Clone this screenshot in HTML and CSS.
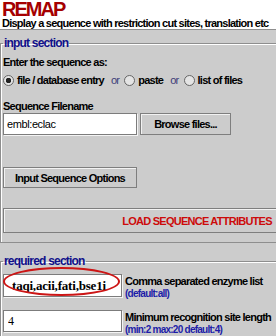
FILE: index.html
```html
<!DOCTYPE html>
<html lang="en">
<head>
    <meta charset="UTF-8">
    <meta name="viewport" content="width=device-width, initial-scale=1.0">
    <title>REMAP</title>
    <link rel="stylesheet" href="styles.css">
</head>
<body>
    <div class="page">
        <header class="head">
            <h1 class="title">REMAP</h1>
            <p class="desc">Display a sequence with restriction cut sites, translation etc</p>
        </header>

        <main class="panel">
            <fieldset class="section">
                <legend>input section</legend>
                <p class="label">Enter the sequence as:</p>
                <div class="choices">
                    <label class="choice"><input type="radio" name="src" checked> file / database entry</label>
                    <span class="or">or</span>
                    <label class="choice"><input type="radio" name="src"> paste</label>
                    <span class="or">or</span>
                    <label class="choice"><input type="radio" name="src"> list of files</label>
                </div>
                <p class="label label-file">Sequence Filename</p>
                <div class="file-row">
                    <input class="field field-file" type="text" value="embl:eclac">
                    <button class="btn btn-browse">Browse files...</button>
                </div>
                <button class="btn btn-options">Input Sequence Options</button>
                <button class="btn btn-load">LOAD SEQUENCE ATTRIBUTES</button>
            </fieldset>

            <fieldset class="section section-req">
                <legend>required section</legend>
                <div class="param">
                    <div class="param-input">
                        <input class="field field-enzyme" type="text" value="taqi,acii,fati,bse1i">
                        <span class="mark"></span>
                    </div>
                    <div class="param-text">
                        <span class="param-name">Comma separated enzyme list</span>
                        <span class="param-hint">(default:all)</span>
                    </div>
                </div>
                <div class="param param-second">
                    <div class="param-input">
                        <input class="field field-num" type="text" value="4">
                    </div>
                    <div class="param-text">
                        <span class="param-name">Minimum recognition site length</span>
                        <span class="param-hint">(min:2 max:20 default:4)</span>
                    </div>
                </div>
            </fieldset>
        </main>
    </div>
</body>
</html>
```

FILE: styles.css
```css
body {
    margin: 0;
    padding: 0;
    overflow: hidden;
    background: #cccccc;
    font-family: 'Liberation Sans', Arial, sans-serif;
    font-weight: bold;
    letter-spacing: -0.75px;
    color: #000;
}

.page {
    width: 392px;
}

.head {
    height: 29px;
    background: #fff;
    border-bottom: 1px solid #8f8f8f;
    padding: 0 2px;
}

.head .title {
    margin: 0;
    height: 18px;
    font-size: 20px;
    line-height: 18px;
    letter-spacing: -2px;
    color: #a50000;
}

.head .desc {
    margin: 0;
    font-size: 11px;
    line-height: 11px;
    white-space: nowrap;
}

.section {
    margin: 6px 0 0;
    padding: 0 2px 9px;
    border: 1px solid #8e8e8e;
    border-right: none;
    box-shadow: inset 1px 1px 0 #fff;
}

.section legend {
    margin-left: 0;
    padding: 0 1px;
    font-size: 12px;
    line-height: 14px;
    letter-spacing: -0.8px;
    color: #10108a;
}

.section-req {
    margin-top: 11px;
    border-bottom: none;
}

.label {
    margin: 5px 0 0;
    font-size: 11px;
    line-height: 14px;
}

.label-file {
    margin-top: 12px;
}

.choices {
    display: flex;
    align-items: center;
    margin-top: 4px;
    height: 14px;
    font-size: 11px;
    line-height: 14px;
    white-space: nowrap;
}

.choice {
    display: flex;
    align-items: center;
    gap: 3px;
}

.choice input {
    appearance: none;
    margin: 0;
    width: 11px;
    height: 11px;
    border: 1px solid #666;
    border-radius: 50%;
    background: #e4e4e4;
    box-sizing: border-box;
}

.choice input:checked {
    background: radial-gradient(circle, #222 0 2.5px, #e4e4e4 3px);
}

.or {
    margin: 0 5px 0 7px;
    font-weight: normal;
    color: #3c3c78;
}

.file-row {
    display: flex;
    gap: 3px;
}

.field {
    box-sizing: border-box;
    margin: 0;
    padding: 0 3px;
    height: 22px;
    border: 1px solid #7c7c7c;
    box-shadow: 1px 1px 0 #f4f4f4;
    background: #fff;
    font-family: 'Liberation Sans', Arial, sans-serif;
    font-size: 11px;
    letter-spacing: -0.4px;
    color: #000;
    outline: none;
}

.field-file {
    width: 134px;
}

.btn {
    display: block;
    box-sizing: border-box;
    margin: 0;
    padding: 0;
    border: 1px solid #7e7e7e;
    box-shadow: inset 1px 1px 0 #f2f2f2;
    background: #cccccc;
    font-family: 'Liberation Sans', Arial, sans-serif;
    font-weight: bold;
    font-size: 11px;
    letter-spacing: -0.75px;
    white-space: nowrap;
    color: #000;
}

.btn-browse {
    width: 91px;
    height: 22px;
}

.btn-options {
    margin-top: 32px;
    width: 134px;
    height: 21px;
}

.btn-load {
    margin-top: 20px;
    width: 388px;
    height: 25px;
    color: #cc0a0a;
}

.param {
    display: flex;
    gap: 3px;
    margin-top: 6px;
}

.param-second {
    margin-top: 11px;
}

.param-input {
    position: relative;
}

.param-input .field {
    width: 119px;
    font-family: 'Liberation Serif', 'Times New Roman', serif;
    padding-left: 4px;
    letter-spacing: 0;
}

.field-enzyme {
    height: 23px;
    font-weight: bold;
    font-size: 13px !important;
    padding-left: 8px !important;
    letter-spacing: -0.2px !important;
}

.field-num {
    font-weight: normal;
    font-size: 12px;
}

.mark {
    position: absolute;
    left: 0;
    top: -7px;
    width: 117px;
    height: 29px;
    box-sizing: border-box;
    border: 2px solid #cc1515;
    border-radius: 50%;
    pointer-events: none;
}

.param-text {
    display: flex;
    flex-direction: column;
    white-space: nowrap;
}

.param-name {
    font-size: 11px;
    line-height: 14px;
}

.param-hint {
    font-size: 10px;
    line-height: 11px;
    color: #1c1ca8;
}
```
